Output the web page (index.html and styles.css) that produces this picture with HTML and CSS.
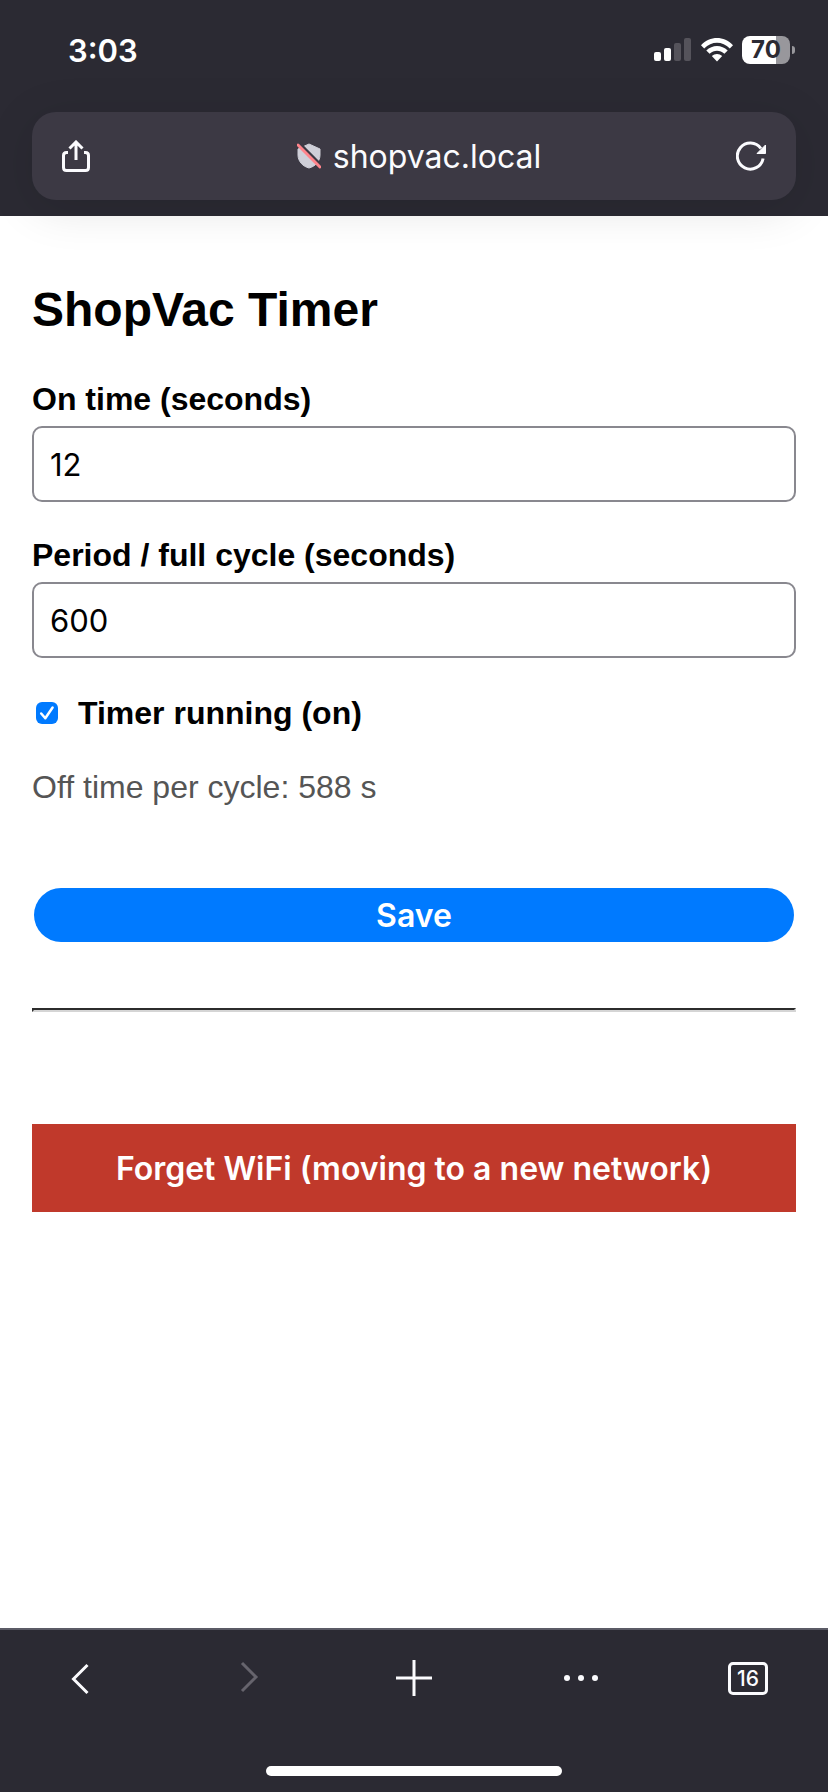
FILE: index.html
```html
<!DOCTYPE html>
<html lang="en">
<head>
<meta charset="UTF-8">
<meta name="viewport" content="width=device-width, initial-scale=1.0">
<title>ShopVac Timer</title>
<link rel="stylesheet" href="styles.css">
</head>
<body>
	<header class="top">
		<div class="status">
			<time class="clock">3:03</time>
			<div class="status-icons">
				<svg class="signal" width="38" height="24" viewBox="0 0 38 24">
					<rect x="0" y="14" width="7" height="9" rx="2" fill="#fff"/>
					<rect x="10" y="10" width="7" height="13" rx="2" fill="#fff"/>
					<rect x="20" y="5" width="7" height="18" rx="2" fill="#55535b"/>
					<rect x="30" y="0" width="7" height="23" rx="2" fill="#55535b"/>
				</svg>
				<svg class="wifi" width="32" height="24" viewBox="0 0 32 24">
					<path d="M0 7.2C9-2.4 23-2.4 32 7.2L28.8 10.4C21.5 2.8 10.5 2.8 3.2 10.4Z" fill="#fff"/>
					<path d="M5.3 12.6C11.3 6.4 20.7 6.4 26.7 12.6L23.4 15.8C19.2 11.6 12.8 11.6 8.6 15.8Z" fill="#fff"/>
					<path d="M10.8 18C13.8 15.3 18.2 15.3 21.2 18L16 23.4Z" fill="#fff"/>
				</svg>
				<div class="battery"><span class="battery-level">70</span></div>
			</div>
		</div>
		<div class="address">
			<button type="button" class="icon-btn" aria-label="Share">
				<svg width="28" height="32" viewBox="0 0 28 32" fill="none" stroke="#fbfbfe" stroke-width="3">
					<path d="M6 12.5H4.5Q1.5 12.5 1.5 15.5V27.5Q1.5 30.5 4.5 30.5H23.5Q26.5 30.5 26.5 27.5V15.5Q26.5 12.5 23.5 12.5H22"/>
					<path d="M14 20V2.5M7.5 8.5L14 2L20.5 8.5"/>
				</svg>
			</button>
			<a class="site" href="#">
				<svg width="24" height="26" viewBox="0 0 24 26">
					<path d="M12 1L23 6V12C23 18.5 18 23.5 12 25C6 23.5 1 18.5 1 12V6Z" fill="#cfcfd8" stroke="#cfcfd8" stroke-linejoin="round"/>
					<path d="M2.5 0.5L24 22" stroke="#3c3944" stroke-width="3"/>
					<path d="M1 2L23 24" stroke="#ff848b" stroke-width="3" stroke-linecap="round"/>
				</svg>
				<span>shopvac.local</span>
			</a>
			<button type="button" class="icon-btn" aria-label="Reload">
				<svg width="30" height="30" viewBox="0 0 30 30">
					<path d="M27.100 17.500A13 13 0 1 1 24.900 7.500" fill="none" stroke="#fbfbfe" stroke-width="3"/>
					<path d="M29.500 4V12.500H21Z" fill="#fbfbfe" stroke="#fbfbfe" stroke-linejoin="round"/>
				</svg>
			</button>
		</div>
	</header>

	<main class="page">
		<h1>ShopVac Timer</h1>
		<form class="timer-form">
			<div class="field">
				<label for="on">On time (seconds)</label>
				<input class="number" id="on" type="text" inputmode="numeric" value="12">
			</div>
			<div class="field">
				<label for="period">Period / full cycle (seconds)</label>
				<input class="number" id="period" type="text" inputmode="numeric" value="600">
			</div>
			<div class="check-row">
				<span class="check-box">
					<input class="check" id="running" type="checkbox" checked>
					<svg class="tick" width="22" height="22" viewBox="0 0 22 22" fill="none" stroke="#fff" stroke-width="2.5" stroke-linecap="round" stroke-linejoin="round">
						<path d="M5.2 11.5L9.3 16.3L16.6 5.5"/>
					</svg>
				</span>
				<label for="running">Timer running (on)</label>
			</div>
			<p class="off-time">Off time per cycle: 588 s</p>
			<button type="submit" class="save">Save</button>
		</form>
		<hr>
		<button type="button" class="forget">Forget WiFi (moving to a new network)</button>
	</main>

	<footer class="bottom">
		<nav class="toolbar">
			<button type="button" class="tool" aria-label="Back">
				<svg width="36" height="36" viewBox="0 0 36 36" fill="none" stroke="#fbfbfe" stroke-width="3">
					<path d="M25.500 5L11.500 19L25.500 33"/>
				</svg>
			</button>
			<button type="button" class="tool" aria-label="Forward" disabled>
				<svg width="36" height="36" viewBox="0 0 36 36" fill="none" stroke="#66646d" stroke-width="3">
					<path d="M13 3L27 17L13 31"/>
				</svg>
			</button>
			<button type="button" class="tool" aria-label="New tab">
				<svg width="36" height="36" viewBox="0 0 36 36" fill="none" stroke="#fbfbfe" stroke-width="3">
					<path d="M0 18H36M18 0V36"/>
				</svg>
			</button>
			<button type="button" class="tool" aria-label="Menu">
				<svg width="36" height="36" viewBox="0 0 36 36" fill="#fbfbfe">
					<circle cx="4" cy="18" r="3"/>
					<circle cx="18" cy="18" r="3"/>
					<circle cx="32" cy="18" r="3"/>
				</svg>
			</button>
			<button type="button" class="tool" aria-label="16 tabs">
				<span class="tab-count">16</span>
			</button>
		</nav>
		<div class="home-bar"></div>
	</footer>
</body>
</html>
```
FILE: styles.css
```css
* {
	box-sizing: border-box;
}
body {
	margin: 0;
	min-height: 100vh;
	display: flex;
	flex-direction: column;
	background: #fff;
	color: #000;
	font-family: "Liberation Sans", Arial, sans-serif;
	font-size: 32px;
}
button {
	border: 0;
	padding: 0;
	background: none;
	font-family: Inter, sans-serif;
	cursor: pointer;
}
svg {
	display: block;
}

/* browser top */
.top {
	background: #2b2a33;
	color: #fbfbfe;
	padding: 0 32px 16px;
	font-family: Inter, sans-serif;
}
.status {
	display: flex;
	justify-content: space-between;
	align-items: center;
	height: 112px;
	padding: 0 3px 12px 36px;
}
.clock {
	font-size: 31px;
	font-weight: 600;
	color: #fff;
}
.status-icons {
	display: flex;
	align-items: center;
	gap: 9px;
}
.battery {
	position: relative;
	width: 48px;
	height: 28px;
	margin-right: 3px;
	border-radius: 8px;
	background: linear-gradient(to right, #fff 70%, #98979c 70%);
}
.battery::after {
	content: "";
	position: absolute;
	left: 50px;
	top: 10px;
	width: 3px;
	height: 8px;
	border-radius: 0 3px 3px 0;
	background: #98979c;
}
.battery-level {
	display: block;
	line-height: 28px;
	text-align: center;
	font-size: 24px;
	font-weight: 700;
	color: #2b2a33;
}
.address {
	display: flex;
	justify-content: space-between;
	align-items: center;
	height: 88px;
	padding: 0 30px;
	border-radius: 24px;
	background: #3c3944;
	box-shadow: 0 8px 48px rgba(0, 0, 0, 0.12);
}
.site {
	display: flex;
	align-items: center;
	gap: 12px;
	padding-left: 12px;
	color: #fbfbfe;
	font-size: 32px;
	text-decoration: none;
}

/* page */
.page {
	flex: 1;
	padding: 66px 32px 32px;
}
h1 {
	margin: 0 0 42px;
	font-size: 48px;
	line-height: 56px;
}
.field {
	display: flex;
	flex-direction: column;
	gap: 8px;
	margin-bottom: 34px;
}
label {
	font-weight: bold;
	line-height: 38px;
}
.number {
	width: 100%;
	height: 76px;
	padding: 0 16px;
	border: 2px solid #89888f;
	border-radius: 10px;
	background: #fff;
	color: #000;
	font-family: Inter, sans-serif;
	font-size: 31px;
}
.check-row {
	display: flex;
	align-items: center;
	gap: 20px;
	padding: 2px 4px 0;
}
.check-box {
	position: relative;
}
.check {
	appearance: none;
	display: block;
	width: 22px;
	height: 22px;
	margin: 0;
	border-radius: 6px;
	background: #007aff;
}
.tick {
	position: absolute;
	top: 0;
	left: 0;
	pointer-events: none;
}
.check:not(:checked) + .tick {
	display: none;
}
.off-time {
	margin: 36px 0 82px;
	line-height: 38px;
	color: #555;
}
.timer-form {
	display: flex;
	flex-direction: column;
}
.save {
	height: 54px;
	margin: 0 2px;
	border-radius: 27px;
	background: #007aff;
	color: #fff;
	font-size: 32px;
	font-weight: 600;
}
hr {
	margin: 66px 0 112px;
	border-width: 2px;
	border-style: solid;
	border-color: #2c2c2c #d5d5d5 #d5d5d5 #2c2c2c;
}
.forget {
	width: 100%;
	height: 88px;
	background: #c0392b;
	color: #fff;
	font-size: 32px;
	font-weight: 600;
}

/* browser bottom */
.bottom {
	border-top: 2px solid #5b5b66;
	background: #2b2a33;
	padding-bottom: 16px;
}
.toolbar {
	display: flex;
	justify-content: space-between;
	padding: 16px 48px 56px;
}
.tool {
	display: flex;
	justify-content: center;
	align-items: center;
	width: 64px;
	height: 64px;
}
.tab-count {
	width: 40px;
	height: 33px;
	border: 3px solid #fbfbfe;
	border-radius: 5px;
	line-height: 27px;
	text-align: center;
	color: #fbfbfe;
	font-size: 21px;
	font-weight: 500;
}
.home-bar {
	width: 296px;
	height: 10px;
	margin: 0 auto;
	border-radius: 5px;
	background: #fff;
}
```
